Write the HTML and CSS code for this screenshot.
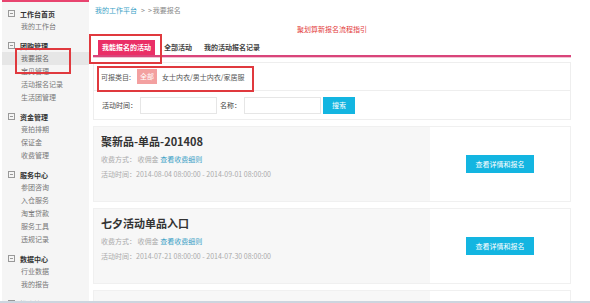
FILE: index.html
```html
<!DOCTYPE html>
<html lang="zh-CN">
<head>
    <meta charset="UTF-8">
    <title>我要报名</title>
    <link rel="stylesheet" href="styles.css">
</head>
<body>
    <div class="page">
        <div class="sidebar">
            <div class="group">
                <div class="group-title"><span class="fold"></span>工作台首页</div>
                <div class="nav-item">我的工作台</div>
            </div>
            <div class="group">
                <div class="group-title"><span class="fold"></span>团购管理</div>
                <div class="nav-item active">我要报名</div>
                <div class="nav-item">宝贝管理</div>
                <div class="nav-item">活动报名记录</div>
                <div class="nav-item">生活团管理</div>
            </div>
            <div class="group">
                <div class="group-title"><span class="fold"></span>资金管理</div>
                <div class="nav-item">竞拍排期</div>
                <div class="nav-item">保证金</div>
                <div class="nav-item">收费管理</div>
            </div>
            <div class="group">
                <div class="group-title"><span class="fold"></span>服务中心</div>
                <div class="nav-item">参团咨询</div>
                <div class="nav-item">入仓服务</div>
                <div class="nav-item">淘宝贷款</div>
                <div class="nav-item">服务工具</div>
                <div class="nav-item">违规记录</div>
            </div>
            <div class="group">
                <div class="group-title"><span class="fold"></span>数据中心</div>
                <div class="nav-item">行业数据</div>
                <div class="nav-item">我的报告</div>
            </div>
            <div class="group">
                <div class="group-title"><span class="fold"></span>推广管理</div>
            </div>
        </div>

        <div class="main">
            <div class="crumbs"><a href="#">我的工作平台</a><span class="sep">&gt;</span><span class="sep">&gt;</span>我要报名</div>
            <div class="guide"><a href="#">聚划算新报名流程指引</a></div>

            <div class="tabs">
                <span class="tab current">我能报名的活动</span>
                <span class="tab">全部活动</span>
                <span class="tab">我的活动报名记录</span>
            </div>

            <div class="filter">
                <div class="filter-row">
                    <span class="filter-label">可报类目:</span>
                    <span class="badge">全部</span>
                    <span class="cat">女士内衣/男士内衣/家居服</span>
                </div>
                <div class="search-row">
                    <span class="field-label">活动时间：</span>
                    <input class="field" type="text">
                    <span class="field-label">名称：</span>
                    <input class="field" type="text">
                    <button class="btn-search">搜索</button>
                </div>
            </div>

            <div class="card">
                <div class="card-info">
                    <h2>聚新品-单品-201408</h2>
                    <p>收费方式： 收佣金 <a href="#">查看收费细则</a></p>
                    <p>活动时间：2014-08-04 08:00:00 - 2014-09-01 08:00:00</p>
                </div>
                <div class="card-action">
                    <button class="btn-join">查看详情和报名</button>
                </div>
            </div>

            <div class="card">
                <div class="card-info">
                    <h2>七夕活动单品入口</h2>
                    <p>收费方式： 收佣金 <a href="#">查看收费细则</a></p>
                    <p>活动时间：2014-07-21 08:00:00 - 2014-07-30 08:00:00</p>
                </div>
                <div class="card-action">
                    <button class="btn-join">查看详情和报名</button>
                </div>
            </div>

            <div class="card">
                <div class="card-info"></div>
                <div class="card-action"></div>
            </div>
        </div>
    </div>

    <!-- red marks drawn over the screenshot -->
    <div class="mark mark-nav"></div>
    <div class="mark mark-tab"></div>
    <div class="mark mark-filter"></div>
    <div class="bottom-line"></div>
</body>
</html>
```

FILE: styles.css
```css
body {
    margin: 0;
    font-family: "Noto Sans CJK SC", "Liberation Sans", sans-serif;
    font-size: 7px;
    color: #666;
    background: #fff;
    overflow: hidden;
    height: 303px;
}

a {
    color: #3a9fc6;
    text-decoration: none;
}

.page {
    display: flex;
    align-items: flex-start;
}

/* sidebar */
.sidebar {
    width: 87px;
    height: 303px;
    margin-left: 2px;
    background: #f5f5f5;
    border-top: 2px solid #e8446f;
    padding-top: 5px;
    box-sizing: border-box;
    flex-shrink: 0;
}

.group {
    margin-bottom: 6px;
}

.group-title {
    display: flex;
    align-items: center;
    height: 13px;
    padding-left: 6px;
    font-weight: bold;
    color: #333;
}

.fold {
    width: 5px;
    height: 5px;
    border: 1px solid #999;
    margin-right: 5px;
    position: relative;
}

.fold::after {
    content: "";
    position: absolute;
    left: 1px;
    right: 1px;
    top: 2px;
    height: 1px;
    background: #999;
}

.nav-item {
    height: 13px;
    line-height: 13px;
    padding-left: 19px;
    color: #777;
}

.nav-item.active {
    background: #e6e6e6;
    color: #666;
}

/* main */
.main {
    width: 478px;
    margin-left: 4px;
}

.crumbs {
    height: 12px;
    line-height: 12px;
    padding: 4px 0 0 2px;
    color: #888;
}

.crumbs .sep {
    margin-left: 4px;
}

.crumbs .sep + .sep {
    margin-left: 3px;
    margin-right: 1px;
}

.guide {
    text-align: center;
    line-height: 12px;
    margin-top: 7px;
}

.guide a {
    color: #e33b3b;
}

.tabs {
    display: flex;
    margin-top: 5px;
    padding-left: 5px;
    border-bottom: 2px solid #d9447a;
    box-shadow: 0 1px 0 #f2c3d3;
}

.tab {
    height: 15px;
    line-height: 15px;
    padding: 0 6px;
    font-weight: 600;
    color: #444;
}

.tab.current {
    padding: 0 4px;
    margin-right: 3px;
    background: #ea2f66;
    color: #fff;
}

.filter {
    margin-top: 5px;
    border: 1px solid #eee;
}

.filter-row {
    display: flex;
    align-items: center;
    height: 27px;
    padding-left: 7px;
    border-bottom: 1px solid #eee;
    color: #555;
}

.badge {
    margin: 0 5px 0 6px;
    padding: 0 3px;
    height: 15px;
    line-height: 15px;
    background: #f3a0a0;
    color: #fff;
}

.search-row {
    display: flex;
    align-items: center;
    height: 28px;
    padding-left: 8px;
    color: #444;
}

.field-label {
    width: 38px;
}

.field-label + .field + .field-label {
    width: auto;
    margin: 0 3px 0 3px;
}

.field {
    width: 77px;
    height: 17px;
    box-sizing: border-box;
    border: 1px solid #e6e6e6;
    padding: 0;
    margin: 0;
}

.btn-search {
    margin-left: 2px;
    width: 32px;
    height: 17px;
    border: none;
    padding: 0;
    background: #13b5e1;
    color: #fff;
    font-family: inherit;
    font-size: 7px;
}

/* activity cards */
.card {
    display: flex;
    height: 76px;
    margin-top: 6px;
    border: 1px solid #f0f0f0;
    box-sizing: border-box;
}

.card:first-of-type {
    margin-top: 7px;
}

.card-info {
    flex: 1;
    background: #f7f7f7;
    padding: 6px 0 0 7px;
}

.card-info h2 {
    margin: 0;
    font-size: 11px;
    line-height: 16px;
    color: #333;
}

.card-info p {
    margin: 0;
    line-height: 15px;
    color: #aaa;
}

.card-info h2 + p {
    margin-top: 3px;
}

.card-action {
    width: 140px;
    display: flex;
    align-items: center;
    justify-content: center;
    background: #fff;
}

.btn-join {
    width: 68px;
    height: 18px;
    border: none;
    padding: 0;
    background: #13b5e1;
    color: #fff;
    font-family: inherit;
    font-size: 7px;
}

/* annotation boxes */
.mark {
    position: absolute;
    border: 2px solid #e0393e;
    box-sizing: border-box;
}

.mark-nav {
    left: 15px;
    top: 48px;
    width: 56px;
    height: 26px;
}

.mark-tab {
    left: 89px;
    top: 34px;
    width: 73px;
    height: 30px;
}

.mark-filter {
    left: 97px;
    top: 66px;
    width: 157px;
    height: 26px;
}

.bottom-line {
    position: fixed;
    left: 0;
    right: 0;
    bottom: 0;
    height: 2px;
    background: #cdd5df;
}
```
